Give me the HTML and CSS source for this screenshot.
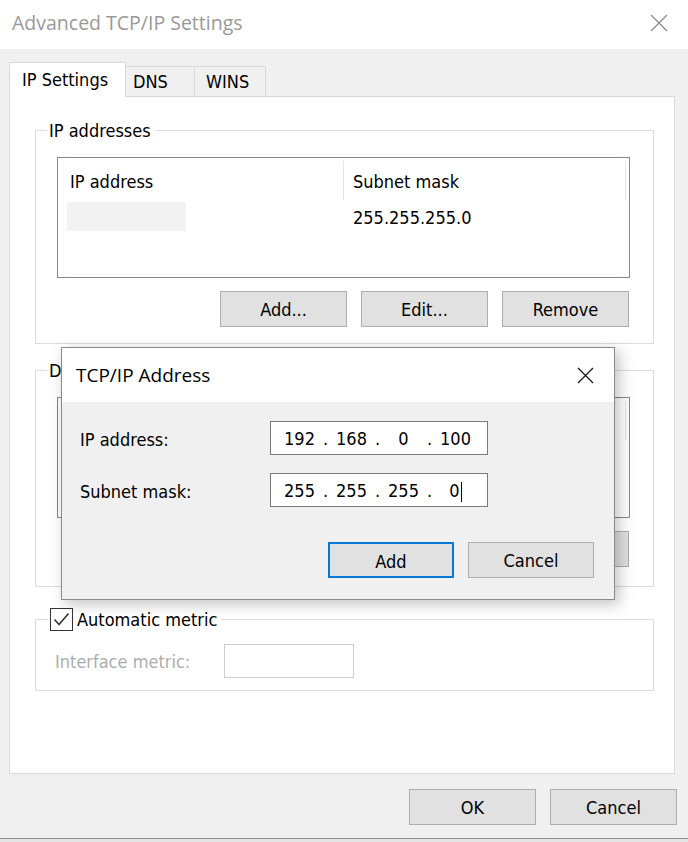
FILE: index.html
```html
<!DOCTYPE html>
<html>

<head>
  <title>Advanced TCP/IP Settings</title>
  <link rel="stylesheet" href="styles.css">
</head>

<body>
  <div class="window">
    <div class="titlebar">
      <span class="window-title">Advanced TCP/IP Settings</span>
      <svg class="close-icon" width="18" height="18" viewBox="0 0 18 18">
        <path d="M1 1L17 17M17 1L1 17" stroke="#8a8a8a" stroke-width="1.2" fill="none" />
      </svg>
    </div>

    <div class="client">
      <div class="tabs">
        <div class="tab tab-active">IP Settings</div>
        <div class="tab tab-dns">DNS</div>
        <div class="tab tab-wins">WINS</div>
      </div>

      <div class="tab-page">
        <fieldset class="group group-ip">
          <legend>IP addresses</legend>
          <div class="group-body">
            <div class="listview">
              <div class="lv-header">
                <div class="lv-col lv-col-first">IP address</div>
                <div class="lv-col">Subnet mask</div>
              </div>
              <div class="lv-row">
                <div class="lv-cell lv-cell-first"><span class="blank"></span></div>
                <div class="lv-cell">255.255.255.0</div>
              </div>
            </div>
            <div class="button-row">
              <button class="btn">Add...</button>
              <button class="btn">Edit...</button>
              <button class="btn">Remove</button>
            </div>
          </div>
        </fieldset>

        <fieldset class="group group-gateways">
          <legend>Default gateways:</legend>
          <div class="group-body">
            <div class="listview">
              <div class="lv-header">
                <div class="lv-col lv-col-first">Gateway</div>
                <div class="lv-col">Metric</div>
              </div>
            </div>
            <div class="button-row">
              <button class="btn">Add...</button>
              <button class="btn">Edit...</button>
              <button class="btn">Remove</button>
            </div>
          </div>
        </fieldset>

        <fieldset class="group group-metric">
          <legend>
            <label class="check-label">
              <span class="checkbox">
                <svg width="21" height="21" viewBox="0 0 21 21">
                  <path d="M3.5 10.5L8 15.5L17.5 4.5" stroke="#333" stroke-width="1.6" fill="none" />
                </svg>
              </span>
              Automatic metric
            </label>
          </legend>
          <div class="group-body metric-row">
            <span class="metric-label">Interface metric:</span>
            <span class="textbox textbox-disabled"></span>
          </div>
        </fieldset>
      </div>

      <div class="footer">
        <button class="btn">OK</button>
        <button class="btn">Cancel</button>
      </div>
    </div>
    <div class="window-edge"></div>

    <!-- TCP/IP Address child dialog -->
    <div class="dialog">
      <div class="dialog-titlebar">
        <span class="dialog-title">TCP/IP Address</span>
        <svg class="close-icon" width="17" height="17" viewBox="0 0 17 17">
          <path d="M1 1L16 16M16 1L1 16" stroke="#1a1a1a" stroke-width="1.3" fill="none" />
        </svg>
      </div>
      <div class="dialog-body">
        <div class="field-row">
          <span class="field-label">IP address:</span>
          <div class="ip-box">
            <span class="ip-seg">192</span><span class="ip-dot">.</span>
            <span class="ip-seg">168</span><span class="ip-dot">.</span>
            <span class="ip-seg">0</span><span class="ip-dot">.</span>
            <span class="ip-seg">100</span>
          </div>
        </div>
        <div class="field-row">
          <span class="field-label">Subnet mask:</span>
          <div class="ip-box">
            <span class="ip-seg">255</span><span class="ip-dot">.</span>
            <span class="ip-seg">255</span><span class="ip-dot">.</span>
            <span class="ip-seg">255</span><span class="ip-dot">.</span>
            <span class="ip-seg">0<span class="caret"></span></span>
          </div>
        </div>
        <div class="dialog-buttons">
          <button class="btn btn-default">Add</button>
          <button class="btn">Cancel</button>
        </div>
      </div>
    </div>
  </div>
</body>

</html>
```

FILE: styles.css
```css
* {
  box-sizing: border-box;
}

body {
  margin: 0;
  background-color: #f0f0f0;
  font-family: "DejaVu Sans Condensed", "DejaVu Sans", sans-serif;
  font-stretch: semi-condensed;
  font-size: 18px;
  color: #000000;
}

.window {
  position: relative;
  width: 688px;
  height: 842px;
  overflow: hidden;
  display: flex;
  flex-direction: column;
  background-color: #f0f0f0;
}

/* title bar */
.titlebar {
  height: 49px;
  flex-shrink: 0;
  display: flex;
  align-items: center;
  justify-content: space-between;
  padding: 0 20px 3px 12px;
  background-color: #ffffff;
}

.window-title {
  font-family: "Open Sans", sans-serif;
  font-stretch: normal;
  font-size: 19.5px;
  line-height: 1;
  color: #999999;
}

.close-icon {
  display: block;
}

.client {
  flex: 1;
  display: flex;
  flex-direction: column;
  padding: 13px 11px 0 9px;
}

/* tabs */
.tabs {
  display: flex;
  align-items: flex-end;
  height: 35px;
}

.tab {
  height: 30px;
  margin-bottom: 1px;
  border: 1px solid #d9d9d9;
  border-bottom: none;
  background-color: #f0f0f0;
  line-height: 29px;
  white-space: nowrap;
}

.tab-active {
  position: relative;
  z-index: 1;
  width: 117px;
  height: 35px;
  margin-bottom: 0;
  padding: 2px 0 0 12px;
  background-color: #ffffff;
}

.tab-dns {
  width: 69px;
  border-left: none;
  padding-left: 7px;
}

.tab-wins {
  width: 71px;
  border-left: none;
  padding-left: 11px;
}

.tab-page {
  width: 666px;
  height: 678px;
  margin-top: -1px;
  padding-top: 22px;
  border: 1px solid #d9d9d9;
  background-color: #ffffff;
}

/* group boxes */
.group {
  width: 619px;
  margin: 0 0 0 25px;
  padding: 0;
  min-width: 0;
  border: 1px solid #dcdcdc;
}

.group legend {
  margin-left: 11px;
  padding: 0 4px 0 2px;
  line-height: 23px;
  height: 23px;
}

.group-body {
  padding: 15px 0 16px 21px;
}

.group-gateways {
  margin-top: 15px;
}

.group-gateways .group-body {
  padding-bottom: 19px;
}

.group-metric {
  margin-top: 21px;
}

.group-metric legend {
  margin-left: 12px;
}

/* list views */
.listview {
  width: 573px;
  height: 121px;
  border: 1px solid #828790;
  background-color: #ffffff;
}

.lv-header {
  display: flex;
  height: 42px;
  padding-top: 3px;
}

.lv-col {
  width: 282px;
  height: 39px;
  padding: 2px 0 0 9px;
  line-height: 37px;
  border-right: 1px solid #e5e5e5;
}

.lv-col-first {
  width: 286px;
  padding-left: 12px;
}

.lv-row {
  display: flex;
  height: 33px;
  padding-top: 2px;
}

.lv-cell {
  padding-left: 9px;
  line-height: 31px;
}

.lv-cell-first {
  width: 286px;
}

.blank {
  display: block;
  width: 119px;
  height: 29px;
  background-color: #f2f2f2;
}

/* buttons */
.button-row {
  display: flex;
  justify-content: flex-end;
  gap: 14px;
  width: 573px;
  margin-top: 13px;
  padding-right: 1px;
}

.btn {
  width: 127px;
  height: 36px;
  padding: 2px 0 0 0;
  border: 1px solid #adadad;
  background-color: #e1e1e1;
  font: inherit;
  color: #000000;
  line-height: 32px;
}

.btn-default {
  border: 2px solid #0078d7;
}

/* automatic metric */
.check-label {
  display: inline-flex;
  align-items: center;
  gap: 4px;
  height: 23px;
}

.checkbox {
  display: block;
  width: 23px;
  height: 23px;
  border: 1px solid #333333;
  background-color: #ffffff;
}

.checkbox svg {
  display: block;
}

.metric-row {
  display: flex;
  align-items: center;
  padding: 13px 0 12px 19px;
}

.metric-label {
  width: 169px;
  color: #adadad;
  padding-top: 1px;
}

.textbox {
  display: block;
  width: 130px;
  height: 34px;
  border: 1px solid #7a7a7a;
  background-color: #ffffff;
}

.textbox-disabled {
  border-color: #cccccc;
}

.footer {
  display: flex;
  justify-content: flex-end;
  gap: 14px;
  margin-top: 15px;
}

.window-edge {
  height: 4px;
  flex-shrink: 0;
  border-top: 1px solid #8c8c8c;
  background-color: #e3e3e3;
}

/* child dialog */
.dialog {
  position: absolute;
  left: 61px;
  top: 347px;
  width: 554px;
  height: 253px;
  display: flex;
  flex-direction: column;
  border: 1px solid #8a8a8a;
  background-color: #f0f0f0;
  box-shadow: 4px 4px 14px rgba(0, 0, 0, 0.25);
}

.dialog-titlebar {
  height: 54px;
  flex-shrink: 0;
  display: flex;
  align-items: center;
  justify-content: space-between;
  padding: 0 20px 0 14px;
  background-color: #ffffff;
}

.dialog-title {
  font-family: "Open Sans", sans-serif;
  font-stretch: normal;
  font-size: 19px;
  line-height: 1;
}

.dialog-body {
  padding: 19px 20px 0 18px;
}

.field-row {
  display: flex;
  align-items: center;
  height: 34px;
  margin-bottom: 18px;
}

.field-label {
  width: 190px;
  padding-top: 2px;
}

.ip-box {
  display: flex;
  width: 218px;
  height: 34px;
  padding: 2px 0 0 5px;
  border: 1px solid #7a7a7a;
  background-color: #ffffff;
  line-height: 30px;
}

.ip-seg {
  width: 47px;
  text-align: center;
  white-space: nowrap;
}

.ip-dot {
  width: 5px;
  text-align: center;
}

.caret {
  display: inline-block;
  width: 1px;
  height: 20px;
  margin-left: 1px;
  vertical-align: middle;
  background-color: #000000;
}

/* the sibling margin above collapses into this one */
.dialog-buttons {
  display: flex;
  justify-content: flex-end;
  gap: 14px;
  margin-top: 35px;
}

.dialog-buttons .btn {
  width: 126px;
}
```
